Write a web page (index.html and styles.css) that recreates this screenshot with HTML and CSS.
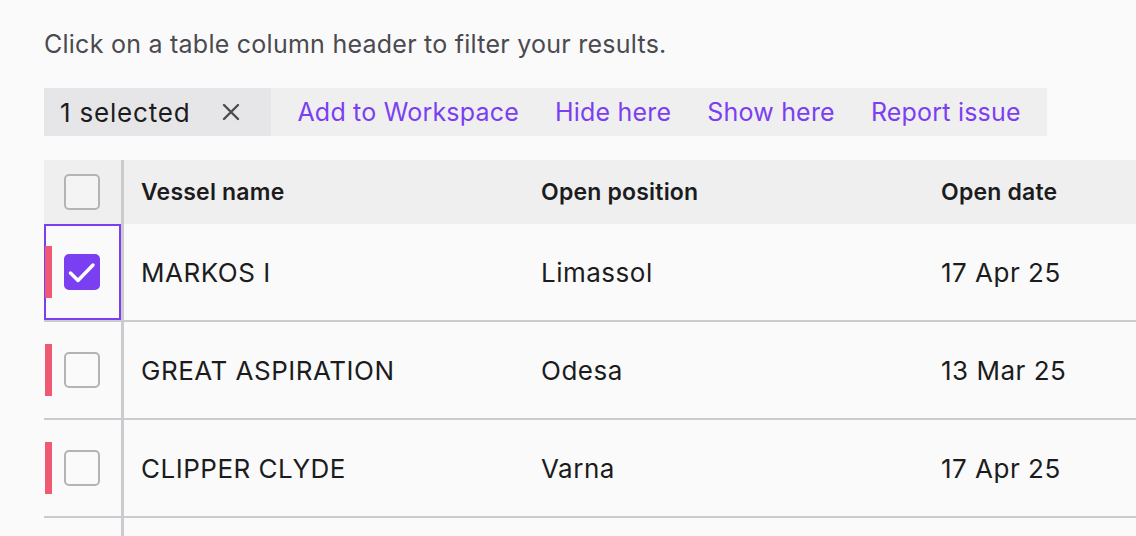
FILE: index.html
```html
<!DOCTYPE html>
<html lang="en">
<head>
    <meta charset="UTF-8">
    <meta name="viewport" content="width=device-width, initial-scale=1.0">
    <title>Vessel positions</title>
    <link rel="stylesheet" href="styles.css">
</head>
<body>
    <p class="hint">Click on a table column header to filter your results.</p>

    <div class="actions">
        <div class="selection">
            <span>1 selected</span>
            <button class="clear" aria-label="Clear selection">
                <svg width="18" height="18" viewBox="0 0 18 18"><path d="M2 2L16 16M16 2L2 16" stroke="#4b4b50" stroke-width="2.4" stroke-linecap="round"/></svg>
            </button>
        </div>
        <div class="links">
            <a href="#">Add to Workspace</a>
            <a href="#">Hide here</a>
            <a href="#">Show here</a>
            <a href="#">Report issue</a>
        </div>
    </div>

    <div class="table">
        <div class="row head">
            <div class="select-cell"><span class="flag none"></span><span class="box"></span></div>
            <div class="cell">Vessel name</div>
            <div class="cell">Open position</div>
            <div class="cell">Open date</div>
        </div>
        <div class="row">
            <div class="select-cell focused">
                <span class="flag"></span>
                <span class="box checked">
                    <svg width="32" height="32" viewBox="0 0 32 32"><path d="M4.5 17L12 24.5L27 9" fill="none" stroke="#fff" stroke-width="3.5" stroke-linecap="round" stroke-linejoin="round"/></svg>
                </span>
            </div>
            <div class="cell">MARKOS I</div>
            <div class="cell">Limassol</div>
            <div class="cell">17 Apr 25</div>
        </div>
        <div class="row">
            <div class="select-cell"><span class="flag"></span><span class="box"></span></div>
            <div class="cell">GREAT ASPIRATION</div>
            <div class="cell">Odesa</div>
            <div class="cell">13 Mar 25</div>
        </div>
        <div class="row">
            <div class="select-cell"><span class="flag"></span><span class="box"></span></div>
            <div class="cell">CLIPPER CLYDE</div>
            <div class="cell">Varna</div>
            <div class="cell">17 Apr 25</div>
        </div>
        <div class="row">
            <div class="select-cell"></div>
            <div class="cell"></div>
            <div class="cell"></div>
            <div class="cell"></div>
        </div>
    </div>
</body>
</html>
```

FILE: styles.css
```css
* {
    margin: 0;
    padding: 0;
    box-sizing: border-box;
}
html, body {
    height: 100%;
    background-color: #fafafa;
    color: #1c1c1e;
    font-family: Inter, "Noto Sans", Arial, sans-serif;
    overflow: hidden;
}
body {
    padding: 30px 0 0 44px;
}
.hint {
    font-size: 25px;
    line-height: 28px;
    letter-spacing: 0.25px;
    color: #4a4a50;
}
.actions {
    display: inline-flex;
    margin-top: 30px;
    height: 48px;
}
.selection {
    display: flex;
    align-items: center;
    background-color: #e6e6e8;
    padding: 0 31px 0 16px;
    font-size: 26px;
    letter-spacing: 0.8px;
    color: #1c1c1e;
}
.clear {
    display: flex;
    border: none;
    background: none;
    margin-left: 32px;
    cursor: pointer;
}
.links {
    display: flex;
    align-items: center;
    gap: 36px;
    background-color: #efefef;
    padding: 0 26px;
}
.links a {
    color: #7b3ff2;
    text-decoration: none;
    font-size: 25px;
    letter-spacing: 0.2px;
}
.table {
    margin-top: 24px;
    width: 1300px;
}
.row {
    display: grid;
    grid-template-columns: 80px 400px 400px 400px;
    height: 98px;
    border-bottom: 2px solid #cbcbcf;
    font-size: 26px;
    letter-spacing: 0.5px;
}
.row.head {
    height: 64px;
    border-bottom: none;
    background-color: #efefef;
    font-size: 23px;
    font-weight: 600;
    letter-spacing: 0.2px;
}
.select-cell {
    display: flex;
    align-items: center;
    padding-left: 1px;
    border-right: 3px solid #cbcbcf;
}
.select-cell.focused {
    box-shadow: inset 0 0 0 2px #7b3ff2;
}
.flag {
    width: 7px;
    height: 52px;
    background-color: #ef5a72;
}
.flag.none {
    visibility: hidden;
}
.box {
    display: flex;
    align-items: center;
    justify-content: center;
    width: 36px;
    height: 36px;
    margin-left: 12px;
    border: 2px solid #b4b4b8;
    border-radius: 5px;
    background-color: #fafafa;
}
.head .box {
    background-color: #f4f4f4;
}
.box.checked {
    border-color: #7b3ff2;
    background-color: #7b3ff2;
}
.cell {
    display: flex;
    align-items: center;
    padding-left: 17px;
}
```
